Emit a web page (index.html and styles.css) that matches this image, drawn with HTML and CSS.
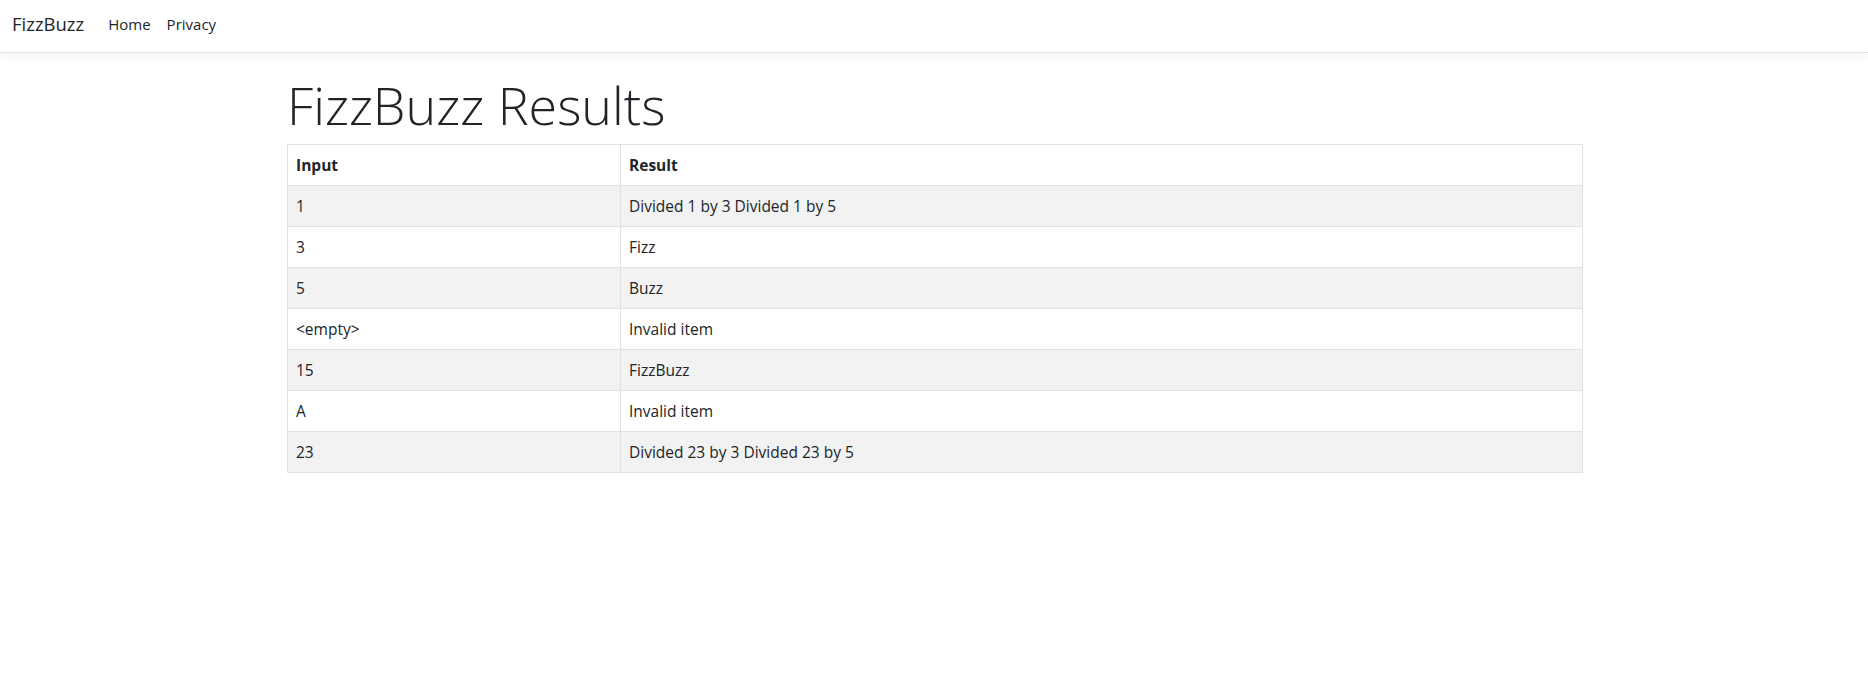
FILE: index.html
```html
<!DOCTYPE html>
<html lang="en">
<head>
<meta charset="utf-8">
<title>FizzBuzz</title>
<link rel="stylesheet" href="styles.css">
</head>
<body>
<header class="navbar">
  <a class="brand" href="#">FizzBuzz</a>
  <nav class="nav">
    <a class="nav-link" href="#">Home</a>
    <a class="nav-link" href="#">Privacy</a>
  </nav>
</header>
<main class="container">
  <h1 class="title">FizzBuzz Results</h1>
  <table class="results">
    <thead>
      <tr><th class="col-input">Input</th><th>Result</th></tr>
    </thead>
    <tbody>
      <tr><td>1</td><td>Divided 1 by 3 Divided 1 by 5</td></tr>
      <tr><td>3</td><td>Fizz</td></tr>
      <tr><td>5</td><td>Buzz</td></tr>
      <tr><td>&lt;empty&gt;</td><td>Invalid item</td></tr>
      <tr><td>15</td><td>FizzBuzz</td></tr>
      <tr><td>A</td><td>Invalid item</td></tr>
      <tr><td>23</td><td>Divided 23 by 3 Divided 23 by 5</td></tr>
    </tbody>
  </table>
</main>
</body>
</html>
```
FILE: styles.css
```css
* { box-sizing: border-box; }
html, body { margin: 0; padding: 0; }
body {
  font-family: "Open Sans", "Noto Sans", "Liberation Sans", sans-serif;
  font-size: 15.5px;
  line-height: 24px;
  color: #212529;
  background: #fff;
}
a { text-decoration: none; color: inherit; }

.navbar {
  display: flex;
  align-items: center;
  height: 53px;
  padding: 0 12px 5px;
  background: #fff;
  border-bottom: 1px solid #dee2e6;
  box-shadow: 0 .25rem .75rem rgba(0, 0, 0, .05);
  margin-bottom: 16px;
}
.brand {
  font-size: 18.5px;
  line-height: 30px;
  padding: 5px 0;
  margin-right: 16px;
  color: #212529;
}
.nav { display: flex; }
.nav-link {
  padding: 8px 8px;
  font-size: 15px;
  color: #212529;
}

.container {
  max-width: 1320px;
  margin: 0 auto;
  padding: 0 11px 0 13px;
}
.title {
  font-size: 52px;
  font-weight: 300;
  line-height: 67px;
  padding-top: 2px;
  margin: 0 0 6px;
  color: #212529;
}
.results {
  width: 100%;
  border-collapse: collapse;
}
.results th, .results td {
  border: 1px solid #dee2e6;
  padding: 8px;
  text-align: left;
  vertical-align: top;
  line-height: 24px;
}
.results th { font-weight: 700; }
.col-input { width: 333px; }
.results tbody tr:nth-child(odd) { background: #f2f2f2; }
```
